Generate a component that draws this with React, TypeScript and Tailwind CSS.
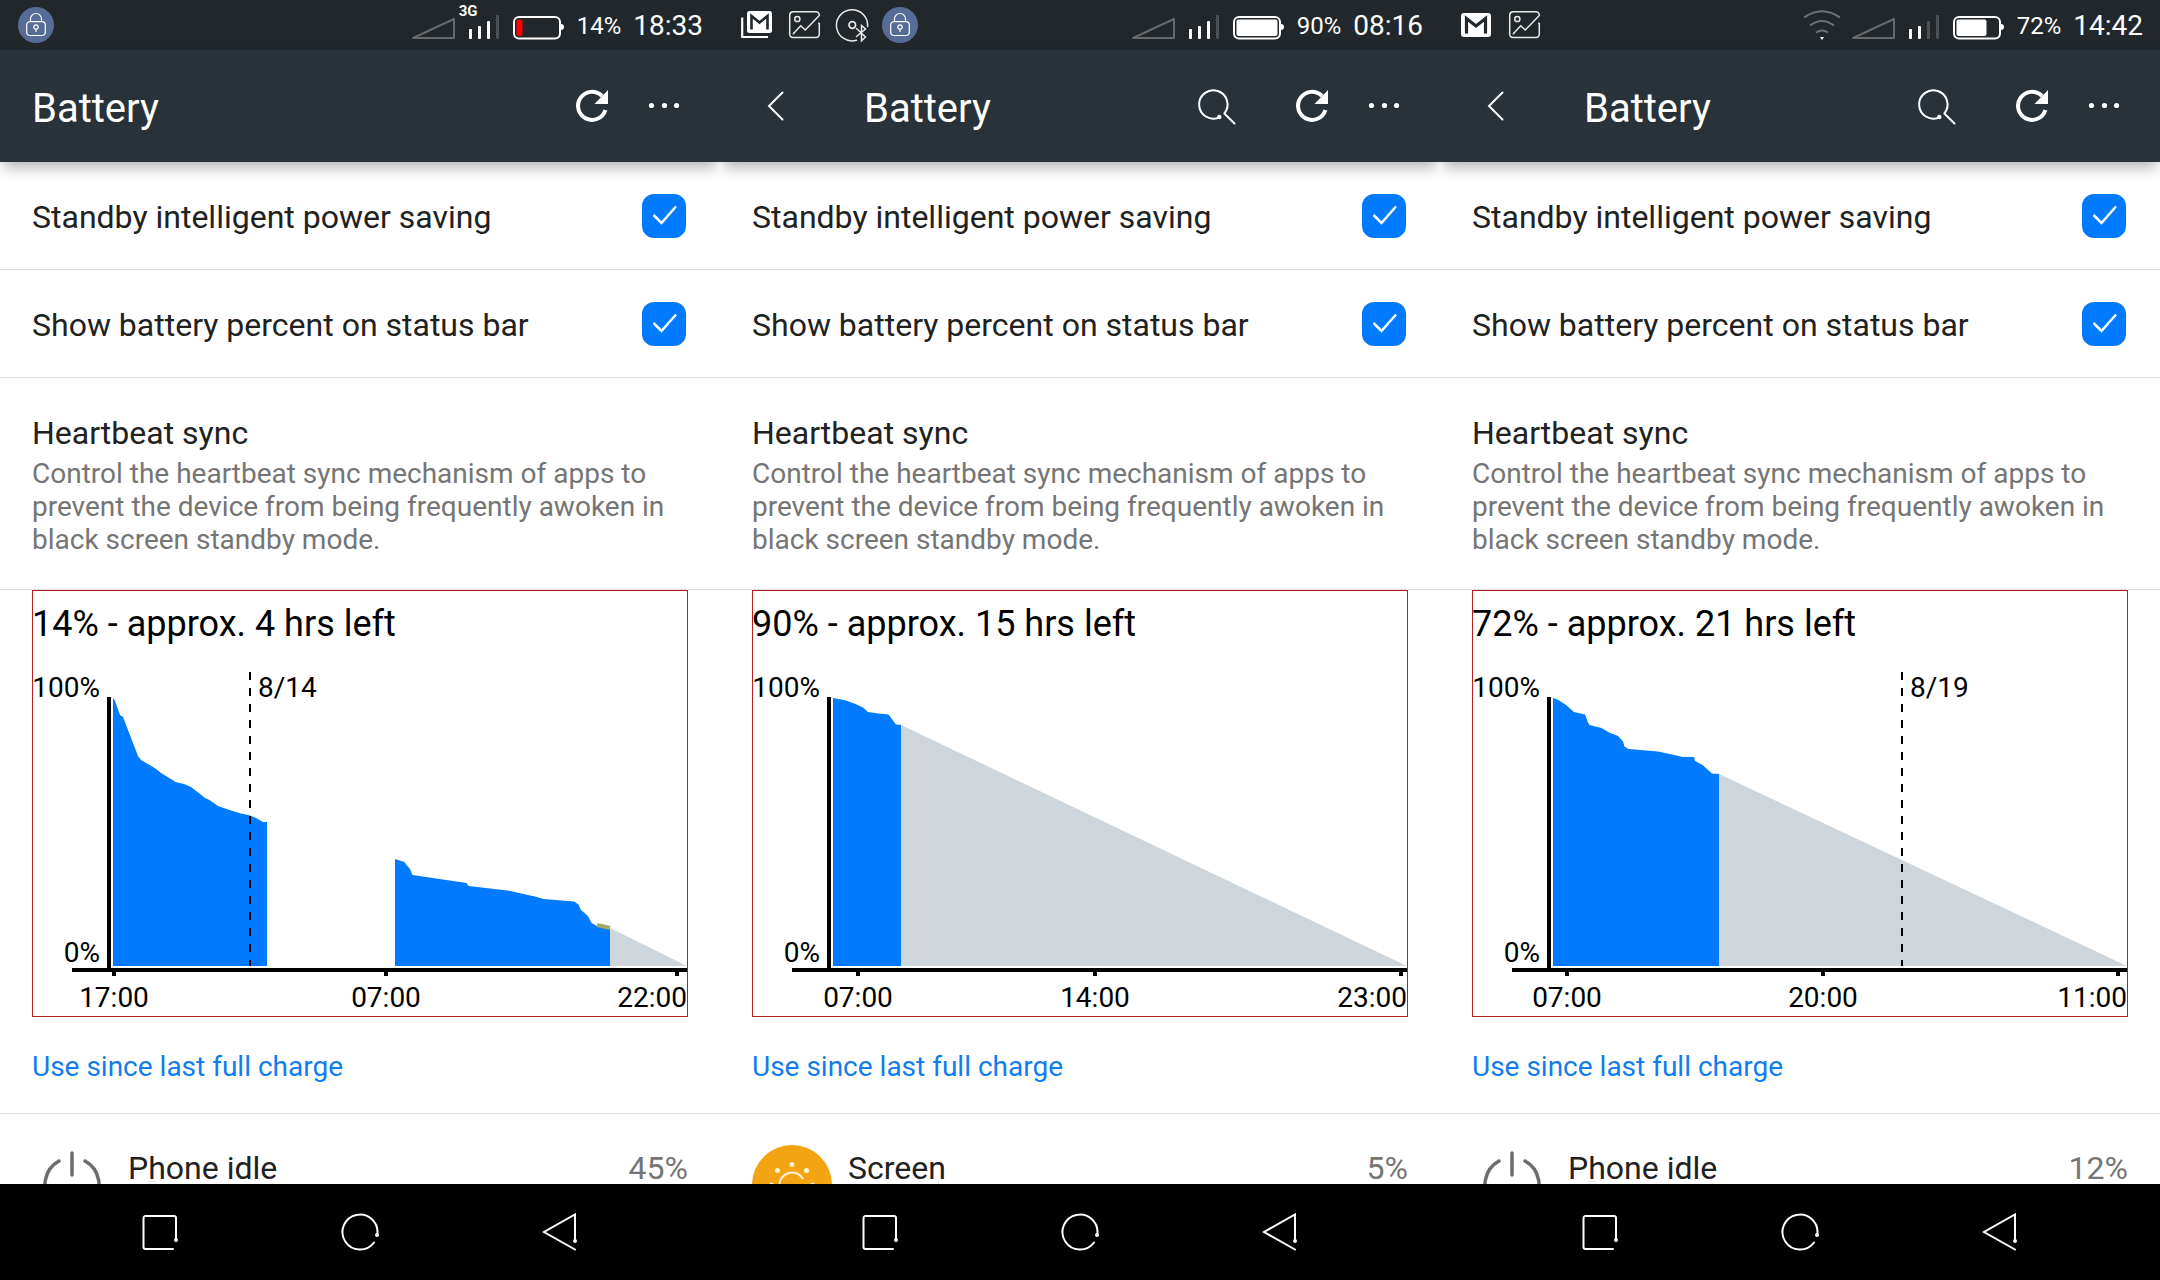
import { useState } from "react";
import type { ReactNode } from "react";

type NoticeName = "lock" | "mail" | "mailStack" | "picture" | "disc";

type Phone = {
  id: string;
  notices: NoticeName[];
  wifi: boolean;
  network?: string;
  bars: number;
  percent: number;
  batteryFill: number;
  low: boolean;
  time: string;
  nested: boolean;
  summary: string;
  history: string[];
  forecast: string;
  warning?: string;
  day?: { x: number; label: string };
  ticks: { x: number; label: string }[];
  usage: { icon: "idle" | "screen"; name: string; share: string };
};

const PHONES: Phone[] = [
  {
    id: "first",
    notices: ["lock"],
    wifi: false,
    network: "3G",
    bars: 3,
    percent: 14,
    batteryFill: 6,
    low: true,
    time: "18:33",
    nested: false,
    summary: "14% - approx. 4 hrs left",
    history: [
      "80,307 80,39 82,42 87,56 90,58 105,97 108,101 113,104 118.5,107 123,110 128,114 133,117 142.5,123 151,125 158,128 164.5,133 172,139 176.5,141 185,147 196.5,151 208,154.5 217,156.5 223,159 230,163 234,163 234,307",
      "362,307 362,200 371.5,203 373.5,206 377,210 379.5,216 433.5,224 435.5,227 474.5,231.5 486,234 502,237.5 510.5,240 541,242.5 545.5,245.5 548,251 555,257 558.5,264 564,267 577,269 577,307",
    ],
    forecast: "577,307 577,269 654,307",
    warning: "M564 266L577 269",
    day: { x: 217, label: "8/14" },
    ticks: [
      { x: 81, label: "17:00" },
      { x: 353, label: "07:00" },
      { x: 644, label: "22:00" },
    ],
    usage: { icon: "idle", name: "Phone idle", share: "45%" },
  },
  {
    id: "second",
    notices: ["mailStack", "picture", "disc", "lock"],
    wifi: false,
    bars: 3,
    percent: 90,
    batteryFill: 41,
    low: false,
    time: "08:16",
    nested: true,
    summary: "90% - approx. 15 hrs left",
    history: ["80,307 80,39 93,41.5 102.5,45 110,48.5 115,53 125.5,54.5 135.5,55.5 143,65.5 148,66 148,307"],
    forecast: "148,307 148,66 654,307",
    ticks: [
      { x: 105, label: "07:00" },
      { x: 342, label: "14:00" },
      { x: 648, label: "23:00" },
    ],
    usage: { icon: "screen", name: "Screen", share: "5%" },
  },
  {
    id: "third",
    notices: ["mail", "picture"],
    wifi: true,
    bars: 2,
    percent: 72,
    batteryFill: 30,
    low: false,
    time: "14:42",
    nested: true,
    summary: "72% - approx. 21 hrs left",
    history: [
      "80,307 80,39 85.5,41 93,46 101,53 112,55.5 115,63.5 116.5,66 128.5,69 136,73.5 145,77 150,82.5 151.5,87.5 155.5,90 185,92.5 196.5,95 210,98 221,98 222,102 229.5,106 239,114.5 246,115 246,307",
    ],
    forecast: "246,307 246,115 654,307",
    day: { x: 429, label: "8/19" },
    ticks: [
      { x: 94, label: "07:00" },
      { x: 350, label: "20:00" },
      { x: 645, label: "11:00" },
    ],
    usage: { icon: "idle", name: "Phone idle", share: "12%" },
  },
];

const BARS = [
  { x: 0, y: 29 },
  { x: 9, y: 26 },
  { x: 18, y: 21 },
  { x: 27, y: 15 },
];

function NoticeIcon({ name }: { name: NoticeName }) {
  return (
    <svg viewBox="0 0 36 36" className="size-9" fill="none" stroke="#e8eaea" strokeWidth="1.5" strokeLinecap="round">
      {name === "lock" && (
        <>
          <circle cx="18" cy="18" r="18" fill="#566b96" stroke="none" />
          <rect x="8.7" y="14.7" width="18.6" height="13.8" rx="3.5" stroke="#fff" strokeWidth="1.2" />
          <path d="M12.5 14.5V12a5.5 5.5 0 0 1 11 0v1.2" stroke="#fff" strokeWidth="1.2" />
          <circle cx="18" cy="20" r="2.2" stroke="#fff" strokeWidth="1.2" />
          <path d="M18 22.4V24.5" stroke="#fff" strokeWidth="1.2" />
        </>
      )}
      {name === "mail" && (
        <>
          <rect x="3" y="6" width="30" height="24" rx="3" fill="#fff" stroke="none" />
          <path d="M8.5 26.5V11.5L18 19l9.5-7.5V26.5" stroke="#22272b" strokeWidth="3.2" strokeLinecap="butt" />
        </>
      )}
      {name === "mailStack" && (
        <>
          <path d="M4.2 10.5V30H30" stroke="#fff" strokeWidth="2.2" strokeLinecap="butt" />
          <rect x="9" y="4" width="25" height="22" rx="2.5" fill="#fff" stroke="none" />
          <path d="M13.5 22.5V9L21.5 15.5 29.5 9V22.5" stroke="#22272b" strokeWidth="2.6" strokeLinecap="butt" />
        </>
      )}
      {name === "picture" && (
        <>
          <path d="M7.3 26.7l7.4-8 4.6 4.3L33.3 8.5V8a3.2 3.2 0 0 0-3.3-3.2H7A3.5 3.5 0 0 0 3.7 8v19A3.5 3.5 0 0 0 7 30.5h23a3.5 3.5 0 0 0 3.3-3.5V16.5" />
          <circle cx="11.3" cy="12" r="2.6" />
          <circle cx="33" cy="16.5" r="1" fill="#e8eaea" stroke="none" />
        </>
      )}
      {name === "disc" && (
        <>
          <path d="M33.6 19.5A15.6 15.6 0 1 0 22.5 33.2" />
          <circle cx="18.3" cy="18" r="3.3" strokeWidth="1.7" />
          <path d="M22.5 21.5L31.5 30 27.5 33.7V18.5L31.5 22 22.5 29.5" />
        </>
      )}
    </svg>
  );
}

function StatusBar({ phone }: { phone: Phone }) {
  return (
    <div className="flex h-[50px] shrink-0 items-center justify-between bg-[#22272b] pl-[18px] pr-[17px] text-white">
      <div className="flex gap-3">
        {phone.notices.map((name) => (
          <NoticeIcon key={name} name={name} />
        ))}
      </div>
      <div className="flex items-center gap-3">
        {phone.wifi && (
          <svg viewBox="1 0 36 50" className="h-[50px] w-9" fill="none" stroke="#6c7073" strokeWidth="2">
            <path d="M1 17.5Q19 5 37 17.5M7 25.5Q19 16.500 31 25.5M13 32.5Q19 28.5 25 32.5" />
            <path d="M17 37h4l-2 3z" fill="#fff" stroke="none" />
          </svg>
        )}
        <svg viewBox="0 0 45 50" className="h-[50px] w-[45px]" fill="none" stroke="#65696c" strokeWidth="2">
          <path d="M1 38L42 19V38Z" strokeLinejoin="round" />
        </svg>
        <div className="relative">
          {phone.network && (
            <span className="absolute -left-2.5 top-1 text-[15px] font-bold leading-[14px]">{phone.network}</span>
          )}
          <svg viewBox="0 0 32 50" className="h-[50px] w-8">
            {BARS.map((bar, i) => (
              <rect
                key={bar.x}
                x={bar.x}
                y={bar.y}
                width="3"
                height={39 - bar.y}
                rx="1"
                fill={i < phone.bars ? "#fff" : "#4d5154"}
              />
            ))}
          </svg>
        </div>
        <svg viewBox="0 0 52 50" className="h-[50px] w-[52px]">
          <rect x="1" y="17" width="46" height="21.5" rx="5" fill="none" stroke="#fff" strokeWidth="2" />
          <path d="M48 24q3 0 3 3t-3 3z" fill="#fff" />
          <rect x="3.5" y="19.5" width={phone.batteryFill} height="16.5" rx="2" fill={phone.low ? "#f00" : "#fff"} />
        </svg>
        <span className="pt-0.5 text-2xl">{phone.percent}%</span>
        <span className="pt-0.5 text-[28px] leading-8">{phone.time}</span>
      </div>
    </div>
  );
}

function IconButton({ label, children }: { label: string; children: ReactNode }) {
  return (
    <button type="button" aria-label={label} className="size-12 shrink-0">
      <svg viewBox="0 0 48 48" className="size-12" fill="none" stroke="#fff" strokeWidth="2" strokeLinecap="round">
        {children}
      </svg>
    </button>
  );
}

function AppBar({ nested }: { nested: boolean }) {
  return (
    <header className="relative z-10 flex h-28 shrink-0 items-center bg-[#283238] px-8 text-white shadow-[0_8px_14px_-3px_rgba(0,0,0,0.3)]">
      {nested && (
        <div className="mr-16 flex">
          <IconButton label="Back">
            <path d="M30.5 10.5L17 24 30.5 37.5" />
          </IconButton>
        </div>
      )}
      <h1 className="flex-1 pt-1.5 text-[40px] leading-[48px]">Battery</h1>
      <div className="flex gap-6">
        {nested && (
          <div className="mr-6 flex">
            <IconButton label="Search">
              <path d="M32.3 31.5A14.2 14.2 0 1 0 27 35.500M32.3 31.5L42.5 41.5" />
              <circle cx="27.3" cy="35" r="1.2" fill="#fff" />
            </IconButton>
          </div>
        )}
        <IconButton label="Refresh">
          <path d="M34 14A14 14 0 1 0 37.4 28" strokeWidth="4" strokeLinecap="butt" />
          <path d="M40 8V22H26.5z" fill="#fff" stroke="none" />
        </IconButton>
        <IconButton label="More options">
          <g fill="#fff" stroke="none">
            <circle cx="11.5" cy="23.5" r="2.6" />
            <circle cx="24.5" cy="23.5" r="2.6" />
            <circle cx="36.5" cy="23.5" r="2.6" />
          </g>
        </IconButton>
      </div>
    </header>
  );
}

function ToggleRow({ id, label }: { id: string; label: string }) {
  const [checked, setChecked] = useState(true);

  return (
    <div className="flex h-[108px] items-center justify-between border-b border-[#dcdcdc] pl-8 pr-[34px]">
      <label htmlFor={id} className="pt-0.5 text-[32px] leading-[38px]">
        {label}
      </label>
      <span className="relative size-11">
        <input
          id={id}
          type="checkbox"
          checked={checked}
          onChange={(e) => setChecked(e.target.checked)}
          className="block size-11 appearance-none rounded-xl border-2 border-gray-400 checked:border-[#007aff] checked:bg-[#007aff]"
        />
        {checked && (
          <svg viewBox="0 0 44 44" className="pointer-events-none absolute inset-0" fill="none" stroke="#fff" strokeWidth="2.5">
            <path d="M11.5 21L19.5 29 34 12.5" />
          </svg>
        )}
      </span>
    </div>
  );
}

function BatteryChart({ phone }: { phone: Phone }) {
  const last = phone.ticks.length - 1;

  return (
    <section className="mx-8 py-px text-black outline-1 -outline-offset-1 outline-[#b92020]">
      <h2 className="pb-0.5 text-[36px] leading-[66px]">{phone.summary}</h2>
      <svg viewBox="-1 0 656 357" className="block h-auto w-full" fontSize="28">
        <polygon points={phone.forecast} fill="#ced6db" />
        {phone.history.map((points) => (
          <polygon key={points} points={points} fill="#007aff" />
        ))}
        {phone.warning && <path d={phone.warning} stroke="#a3a763" strokeWidth="4" />}
        {phone.day && (
          <>
            <line x1={phone.day.x} x2={phone.day.x} y1="13" y2="307" stroke="#000" strokeWidth="2" strokeDasharray="8 8" />
            <text x={phone.day.x + 8} y="38">
              {phone.day.label}
            </text>
          </>
        )}
        <rect x="74" y="38" width="4" height="272" />
        <rect x="39" y="309" width="616" height="4" />
        <text x="67" y="38" textAnchor="end">
          100%
        </text>
        <text x="67" y="303" textAnchor="end">
          0%
        </text>
        {phone.ticks.map((tick, i) => (
          <g key={tick.x}>
            <rect x={tick.x - 2} y="312" width="4" height="5" />
            <text x={i === last ? 654 : tick.x} y="348" textAnchor={i === last ? "end" : "middle"}>
              {tick.label}
            </text>
          </g>
        ))}
      </svg>
    </section>
  );
}

function UsageIcon({ icon }: { icon: "idle" | "screen" }) {
  if (icon === "idle") {
    return (
      <svg viewBox="0 0 80 80" className="size-20" fill="none" stroke="#6b6b6b" strokeWidth="3.5" strokeLinecap="round">
        <path d="M27 16A27 27 0 1 0 53 16" />
        <path d="M40 8V30" />
      </svg>
    );
  }
  return (
    <svg viewBox="0 0 80 80" className="size-20">
      <circle cx="40" cy="40" r="40" fill="#f3a413" />
      <path d="M51 34A12.5 12.5 0 1 0 51 46" fill="none" stroke="#fff3d6" strokeWidth="2" />
      <g fill="#fff3d6">
        <circle cx="40" cy="19.5" r="2.5" />
        <circle cx="25.5" cy="25.5" r="2.5" />
        <circle cx="54.5" cy="25.5" r="2.5" />
        <circle cx="19.5" cy="40" r="2.5" />
        <circle cx="60.5" cy="40" r="2.5" />
        <circle cx="25.5" cy="54.5" r="2.5" />
        <circle cx="54.5" cy="54.5" r="2.5" />
        <circle cx="40" cy="60.5" r="2.5" />
      </g>
    </svg>
  );
}

function NavButton({ label, children }: { label: string; children: ReactNode }) {
  return (
    <button type="button" aria-label={label} className="flex items-center justify-center">
      <svg viewBox="0 0 40 40" className="size-10" fill="none" stroke="#fff" strokeWidth="2" strokeLinecap="round">
        {children}
      </svg>
    </button>
  );
}

function NavBar() {
  return (
    <nav className="grid h-24 shrink-0 grid-cols-3 bg-black px-[60px]">
      <NavButton label="Recent apps">
        <path d="M36 28V6a2 2 0 0 0-2-2H5.5a2 2 0 0 0-2 2v29a2 2 0 0 0 2 2H33" />
        <circle cx="36" cy="28" r="1" fill="#fff" />
      </NavButton>
      <NavButton label="Home">
        <path d="M37.3 22.5A17.5 17.5 0 1 0 34 30.5" />
        <circle cx="37" cy="23" r="1" fill="#fff" />
      </NavButton>
      <NavButton label="Back">
        <path d="M35 29V2.5L4 20 35 37.5" />
        <circle cx="35" cy="29" r="1" fill="#fff" />
      </NavButton>
    </nav>
  );
}

function PhoneScreen({ phone }: { phone: Phone }) {
  return (
    <div className="flex h-screen min-w-0 flex-col overflow-hidden bg-white">
      <StatusBar phone={phone} />
      <AppBar nested={phone.nested} />
      <main className="min-h-0 flex-1 overflow-y-auto text-[#212121] [scrollbar-width:none]">
        <ToggleRow id={`${phone.id}-standby`} label="Standby intelligent power saving" />
        <ToggleRow id={`${phone.id}-percent`} label="Show battery percent on status bar" />
        <div className="border-b border-[#dcdcdc] px-8 pb-[33px] pt-9">
          <h2 className="text-[32px] leading-[38px]">Heartbeat sync</h2>
          <p className="mt-[5px] text-[28px] leading-[33px] text-[#757575]">
            Control the heartbeat sync mechanism of apps to prevent the device from being frequently awoken in black
            screen standby mode.
          </p>
        </div>
        <BatteryChart phone={phone} />
        <h2 className="border-b border-[#dcdcdc] px-8 pt-1 text-[28px] leading-[92px] text-[#0f7df0]">
          Use since last full charge
        </h2>
        <div className="flex gap-4 px-8 pt-[31px] text-[32px] leading-[30px]">
          <UsageIcon icon={phone.usage.icon} />
          <span className="flex-1 pt-2">{phone.usage.name}</span>
          <span className="pt-2 text-[#757575]">{phone.usage.share}</span>
        </div>
      </main>
      <NavBar />
    </div>
  );
}

export default function App() {
  return (
    <div className="grid grid-cols-3 font-['Roboto',sans-serif]">
      {PHONES.map((phone) => (
        <PhoneScreen key={phone.id} phone={phone} />
      ))}
    </div>
  );
}
